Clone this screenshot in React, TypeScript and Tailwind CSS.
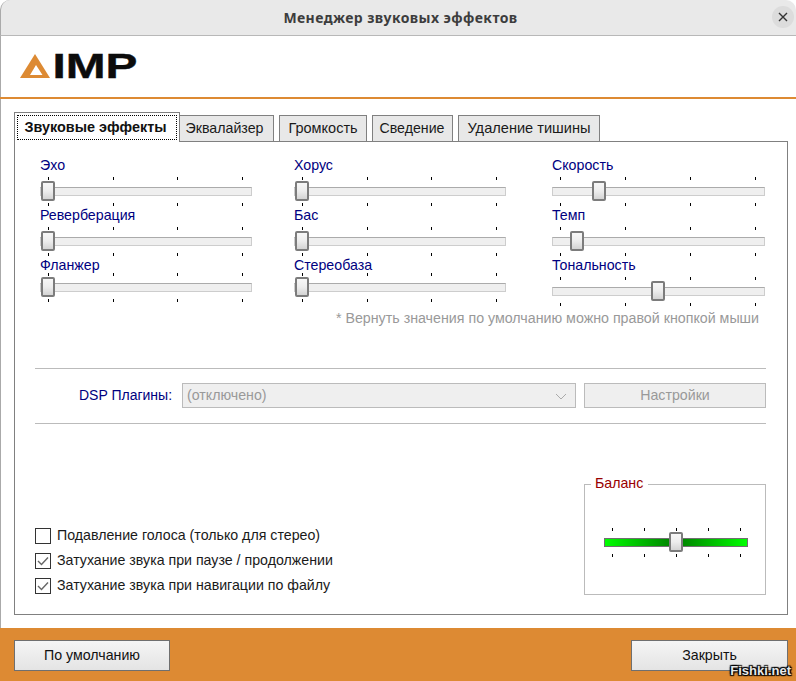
const sans = "font-['Liberation_Sans',Arial,sans-serif]";

function Ticks({ className = "" }: { className?: string }) {
  return (
    <div className={`flex justify-between pl-[8px] pr-[9px] h-[3px] ${className}`}>
      {[0, 1, 2, 3].map((i) => (
        <span key={i} className="w-px h-[3px] bg-black" />
      ))}
    </div>
  );
}

function Thumb({ left }: { left: number }) {
  return (
    <span
      className="absolute top-[-7px] w-[14px] h-[20px] border-2 border-[#7c7c7c] rounded-[2px] bg-gradient-to-b from-[#f7f7f7] via-[#ededed] to-[#d4d4d4]"
      style={{ left }}
    />
  );
}

function Slider({ label, left, labelH = 21 }: { label: string; left: number; labelH?: number }) {
  return (
    <div className="flex flex-col">
      <div className="text-[14.2px] leading-[18px] text-[#000080]" style={{ height: labelH }}>
        {label}
      </div>
      <Ticks />
      <div className="relative h-[9px] mt-[7px] bg-[#efefef] border border-[#ababab] border-b-[#cdcdcd] border-l-[#cdcdcd] border-r-[#cdcdcd]">
        <Thumb left={left} />
      </div>
      <Ticks className="mt-[7px]" />
    </div>
  );
}

function Check({ checked, label }: { checked?: boolean; label: string }) {
  return (
    <div className="flex items-center gap-[6px] h-[16px] text-[14.2px] text-[#1a1a1a]">
      <span className="w-[16px] h-[16px] border border-[#333] bg-white flex items-center justify-center">
        {checked && (
          <svg width="12" height="10" viewBox="0 0 12 10" fill="none">
            <path d="M1 5 L4.500 8.500 L11 1.500" stroke="#666" strokeWidth="1.4" />
          </svg>
        )}
      </span>
      {label}
    </div>
  );
}

function Tab({ label, width, extra = "" }: { label: string; width: number; extra?: string }) {
  return (
    <div
      className={`h-[26px] bg-[#e8e8e8] border border-[#808080] border-b-0 flex items-center justify-center text-[#1a1a1a] ${extra}`}
      style={{ width }}
    >
      {label}
    </div>
  );
}

function FootButton({ label, width }: { label: string; width: number }) {
  return (
    <button
      className="h-[31px] border border-[#6f6f6f] bg-gradient-to-b from-[#f5f5f5] to-[#e4e4e4] text-[14.2px] text-[#111]"
      style={{ width }}
    >
      {label}
    </button>
  );
}

function BalanceTicks({ className = "" }: { className?: string }) {
  return (
    <div className={`flex justify-between pl-[8px] pr-[7px] h-[3px] ${className}`}>
      {[0, 1, 2, 3, 4].map((i) => (
        <span key={i} className="w-px h-[3px] bg-black" />
      ))}
    </div>
  );
}

export default function App() {
  return (
    <div className={`relative w-[796px] h-[681px] overflow-hidden bg-white flex flex-col ${sans}`}>
      <div className="relative h-[36px] shrink-0 bg-[#e9e9e9] border-b border-[#b8b8b8] border-l border-l-[#aaaaaa] rounded-t-[10px] flex items-center justify-center">
        <span className="font-['Noto_Sans',sans-serif] font-bold text-[14px] tracking-[0.42px] text-[#3d3d3d] ml-[4px]">
          Менеджер звуковых эффектов
        </span>
        <span className="absolute right-[2px] top-[6px] w-[22px] h-[22px] rounded-full bg-[#dcdcdc] flex items-center justify-center">
          <svg width="10" height="10" viewBox="0 0 10 10" fill="none">
            <path d="M1 1 L9 9 M9 1 L1 9" stroke="#333" strokeWidth="1.4" />
          </svg>
        </span>
      </div>

      <div className="h-[61px] shrink-0 border-l border-[#aaaaaa] pl-[19px] pt-[18px]">
        <svg width="124" height="26" viewBox="0 0 124 26" className="overflow-visible">
          <path fillRule="evenodd" d="M15 0 L30 24 L0 24 Z M16 11 L10 21 L22.500 21 Z" fill="#dd8a33" />
          <text
            x="32.500"
            y="24"
            textLength="85"
            lengthAdjust="spacingAndGlyphs"
            fontFamily="Liberation Sans"
            fontWeight="700"
            fontSize="34.5"
            fill="#0c0c0c"
            stroke="#0c0c0c"
            strokeWidth="0.4"
          >
            IMP
          </text>
        </svg>
      </div>
      <div className="h-[2px] shrink-0 bg-[#dd8a33]" />

      <div className="flex-1 flex flex-col border-l border-[#aaaaaa] pl-[13px] pr-[8px] pt-[13px]">
        <div className="flex items-end h-[29px] gap-[5px] relative z-10">
          <div className="h-[30px] -mb-px w-[166px] bg-white border border-[#808080] border-b-0 p-[2px] mr-[-6px]">
            <div className="h-full border border-dotted border-black flex items-center justify-center pr-[3px] font-bold text-[14.4px] text-[#111]">
              Звуковые эффекты
            </div>
          </div>
          <Tab label="Эквалайзер" width={95} extra="pr-[4px] text-[14.2px]" />
          <Tab label="Громкость" width={88} extra="text-[14.5px]" />
          <Tab label="Сведение" width={81} extra="pr-[1px] text-[14.2px]" />
          <Tab label="Удаление тишины" width={142} extra="text-[14.6px]" />
        </div>

        <div className="h-[474px] border border-[#808080] pl-[20px] pr-[21px] flex flex-col">
          <div className="grid grid-cols-[254px_258px_213px] pt-[14px] ml-[5px]">
            <div className="flex flex-col w-[212px]">
              <Slider label="Эхо" left={0} />
              <Slider label="Реверберация" left={0} />
              <Slider label="Фланжер" left={0} labelH={17} />
            </div>
            <div className="flex flex-col w-[212px]">
              <Slider label="Хорус" left={0} />
              <Slider label="Бас" left={0} />
              <Slider label="Стереобаза" left={0} labelH={17} />
            </div>
            <div className="flex flex-col">
              <Slider label="Скорость" left={39} />
              <Slider label="Темп" left={17} />
              <Slider label="Тональность" left={98} />
            </div>
          </div>

          <div className="text-right text-[14.24px] leading-[18px] text-[#999] pr-[7px] mt-[3px]">
            * Вернуть значения по умолчанию можно правой кнопкой мыши
          </div>

          <div className="mt-[41px] h-[56px] border-y border-[#bbb] flex items-start">
            <span className="mt-[17px] ml-[44px] w-[93px] shrink-0 whitespace-nowrap text-[14px] leading-[18px] text-[#000080]">DSP Плагины:</span>
            <div className="mt-[14px] ml-[10px] w-[394px] h-[25px] pt-px bg-[#efefef] border border-[#bbb] flex items-center justify-between pl-[4px] pr-[8px] text-[14.2px] text-[#999]">
              (отключено)
              <svg width="12" height="7" viewBox="0 0 12 7" fill="none">
                <path d="M1 1 L6 6 L11 1" stroke="#aaa" />
              </svg>
            </div>
            <div className="mt-[14px] ml-[8px] w-[182px] h-[25px] pt-px bg-[#efefef] border border-[#bbb] flex items-center justify-center text-[14.2px] text-[#999]">
              Настройки
            </div>
          </div>

          <div className="flex justify-between items-start mt-[60px]">
            <div className="flex flex-col gap-[9px] mt-[44px]">
              <Check label="Подавление голоса (только для стерео)" />
              <Check checked label="Затухание звука при паузе / продолжении" />
              <Check checked label="Затухание звука при навигации по файлу" />
            </div>
            <div className="relative w-[182px] h-[111px] border border-[#bbb] flex flex-col pt-[43px] pl-[19px] pr-[17px]">
              <span className="absolute -top-[11px] left-[6px] pl-[4px] pr-[5px] bg-white text-[14.2px] leading-[18px] text-[#990000]">
                Баланс
              </span>
              <BalanceTicks />
              <div className="relative h-[9px] mt-[7px] border border-[#6f6f6f] bg-gradient-to-r from-[#00ff00] via-[#007d00] to-[#00ff00]">
                <Thumb left={64} />
              </div>
              <BalanceTicks className="mt-[7px]" />
            </div>
          </div>
        </div>
      </div>

      <div className="h-[53px] shrink-0 bg-[#dd8a33] flex items-start justify-between pt-[12px] pl-[14px] pr-[8px]">
        <FootButton label="По умолчанию" width={156} />
        <FootButton label="Закрыть" width={157} />
      </div>

      <span className="absolute right-[5px] top-[661px] font-bold text-[13px] text-[#e8e8e8] [text-shadow:0_0_2px_#000,1px_1px_1px_#000,-1px_-1px_1px_#000,1px_-1px_1px_#000,-1px_1px_1px_#000]">
        Fishki.net
      </span>
    </div>
  );
}
